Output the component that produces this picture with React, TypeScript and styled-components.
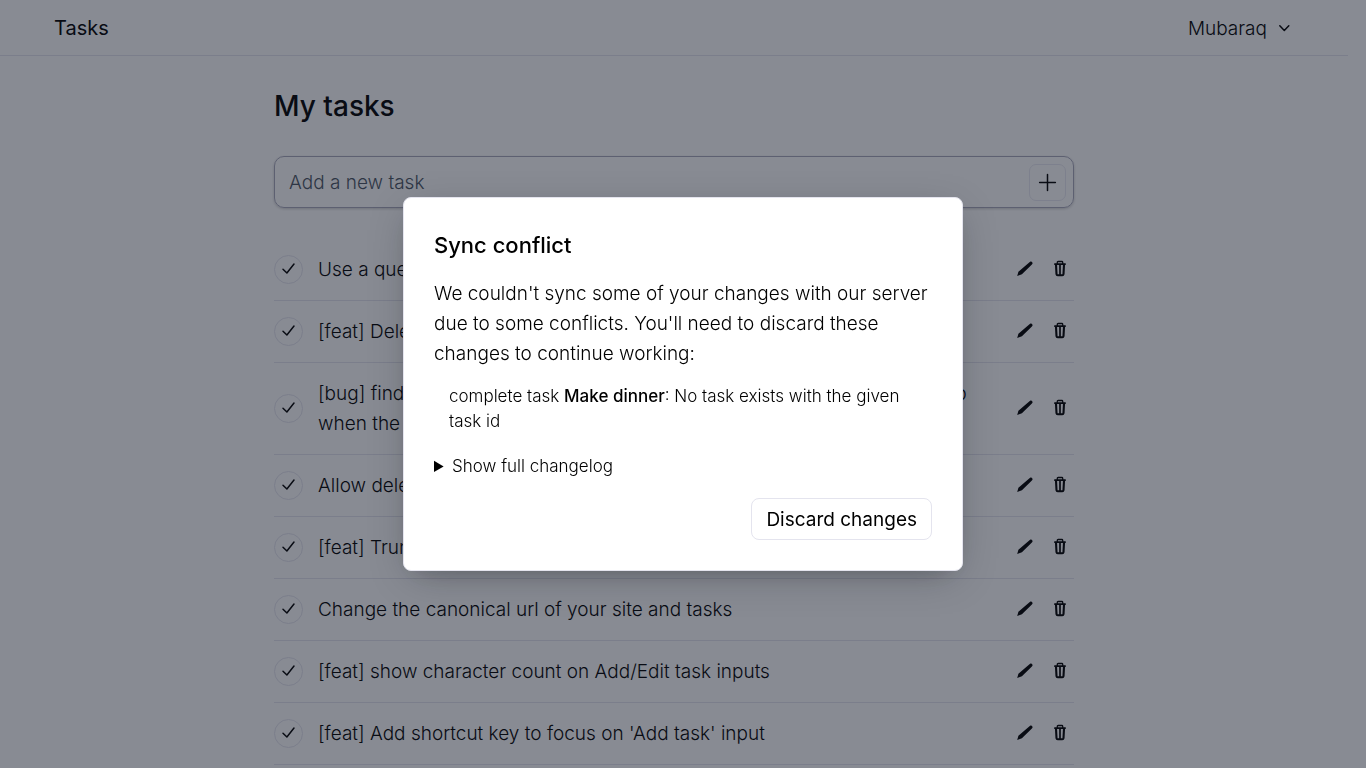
import React from 'react';
import styled, { createGlobalStyle } from 'styled-components';

const GlobalStyle = createGlobalStyle`
  *, *::before, *::after { box-sizing: border-box; }
  html { background: #fff; }
  body {
    margin: 0;
    font-family: Inter, "Open Sans", sans-serif;
    font-size: 19px;
    font-weight: 300;
    line-height: 30px;
    color: #000;
  }
  button, input { font: inherit; color: inherit; }
  h1, h2, p, ul { margin: 0; padding: 0; }
  ul { list-style: none; }
`;

const Page = styled.div`
  padding-right: 18px;
`;

const Header = styled.header`
  display: flex;
  align-items: center;
  justify-content: space-between;
  height: 56px;
  padding: 0 54px;
  border-bottom: 1px solid #e4e4ee;
`;

const Brand = styled.a`
  color: inherit;
  font-size: 20px;
  font-weight: 400;
  text-decoration: none;
`;

const AccountButton = styled.button`
  display: flex;
  align-items: center;
  gap: 8px;
  padding: 2px 0 0;
  border: 0;
  background: none;
`;

const Main = styled.main`
  max-width: 800px;
  margin: 0 auto;
  padding-top: 32px;
`;

const PageTitle = styled.h1`
  font-size: 28px;
  font-weight: 500;
  line-height: 36px;
`;

const AddForm = styled.form`
  display: flex;
  align-items: center;
  height: 52px;
  margin: 32px 0 31px;
  padding: 0 7px 0 14px;
  border: 1px solid #a9a9bb;
  border-radius: 10px;
  box-shadow: 0 1px 3px rgba(0, 0, 0, 0.2);
`;

const AddInput = styled.input`
  flex: 1;
  min-width: 0;
  padding: 2px 0 0;
  border: 0;
  outline: 0;
  background: none;
  &::placeholder { color: #4b5563; opacity: 1; }
`;

const AddButton = styled.button`
  display: grid;
  place-items: center;
  width: 37px;
  height: 37px;
  padding: 0;
  border: 1px solid #e9e9f2;
  border-radius: 7px;
  background: none;
`;

const TaskRow = styled.li`
  display: flex;
  align-items: center;
  padding: 14px 0 15px;
  border-bottom: 1px solid #e4e4ee;
`;

const CompleteButton = styled.button`
  display: grid;
  place-items: center;
  flex: none;
  width: 29px;
  height: 29px;
  margin-right: 15px;
  padding: 0;
  border: 1px solid #e4e4ee;
  border-radius: 50%;
  background: none;
`;

const TaskText = styled.span`
  flex: 1;
  min-width: 0;
  padding: 2px 24px 0 0;
`;

const RowActions = styled.div`
  display: flex;
  gap: 7px;
`;

const IconButton = styled.button`
  display: grid;
  place-items: center;
  width: 28px;
  height: 28px;
  padding: 0;
  border: 0;
  background: none;
`;

const Overlay = styled.div`
  position: fixed;
  inset: 0;
  display: grid;
  place-items: center;
  background: rgba(17, 24, 39, 0.5);
`;

const Dialog = styled.section`
  width: 560px;
  max-width: calc(100% - 32px);
  padding: 31px 30px 30px;
  border: 1px solid #e4e4ee;
  border-radius: 8px;
  background: #fff;
  box-shadow: 0 10px 38px -10px rgba(14, 18, 22, 0.35), 0 10px 20px -15px rgba(14, 18, 22, 0.2);
`;

const DialogTitle = styled.h2`
  margin-bottom: 18px;
  font-size: 22px;
  font-weight: 500;
  line-height: 32px;
`;

const ConflictList = styled.ul`
  margin: 15px 0 20px;
  padding: 0 15px;
  font-size: 17px;
  line-height: 25px;
`;

const TaskName = styled.strong`
  font-weight: 500;
`;

const Changelog = styled.details`
  font-size: 17px;
  line-height: 25px;
`;

const DialogFooter = styled.div`
  display: flex;
  justify-content: flex-end;
  margin-top: 19px;
`;

const DiscardButton = styled.button`
  height: 42px;
  padding: 2px 14px 0;
  border: 1px solid #e4e4ee;
  border-radius: 8px;
  background: #fff;
  font-weight: 400;
`;

const CheckIcon = () => (
  <svg width="19" height="19" viewBox="0 0 19 19" fill="none" stroke="currentColor" strokeWidth="1.5" strokeLinecap="round" strokeLinejoin="round" aria-hidden="true">
    <path d="M4 9.2L7.9 13L15 4" />
  </svg>
);

const PlusIcon = () => (
  <svg width="19" height="19" viewBox="0 0 19 19" fill="none" stroke="currentColor" strokeWidth="1.5" strokeLinecap="round" aria-hidden="true">
    <path d="M9.5 1.6v15.8M1.6 9.5h15.8" />
  </svg>
);

const ChevronIcon = () => (
  <svg width="19" height="19" viewBox="0 0 19 19" fill="none" stroke="currentColor" strokeWidth="1.5" strokeLinecap="round" strokeLinejoin="round" aria-hidden="true">
    <path d="M4.8 6.7l4.5 4.8 4.5-4.8" />
  </svg>
);

const PencilIcon = () => (
  <svg width="20" height="20" viewBox="0 0 20 20" aria-hidden="true">
    <path d="M15.1 2.7c1.3-1.1 3.3.9 2.2 2.3L16.4 6 6.9 15.2 2.2 17 3.4 12.7 13.9 3.7z" fill="currentColor" />
  </svg>
);

const TrashIcon = () => (
  <svg width="20" height="20" viewBox="0 0 20 20" fill="none" stroke="currentColor" strokeLinecap="round" strokeLinejoin="round" aria-hidden="true">
    <path d="M4.9 5.1h10.2" strokeWidth="1.8" />
    <path d="M7.3 4.6V3.3c0-.5.3-.8.8-.8h3.8c.5 0 .8.3.8.8v1.3" strokeWidth="1.3" />
    <path d="M6 5.8l.5 9.3c.1.8.5 1.2 1.2 1.2h4.6c.7 0 1.1-.4 1.2-1.2l.5-9.3" strokeWidth="2.1" />
    <path d="M10 6.4v9.2" strokeWidth="1.7" />
  </svg>
);

const tasks = [
  'Use a queue to sync offline changes',
  '[feat] Delete all completed tasks',
  '[bug] find out why the list of completed tasks sometimes does not end up when the page is reloaded',
  'Allow deleting tasks while offline',
  '[feat] Truncate long task names',
  'Change the canonical url of your site and tasks',
  '[feat] show character count on Add/Edit task inputs',
  "[feat] Add shortcut key to focus on 'Add task' input",
];

export default function App() {
  return (
    <>
      <GlobalStyle />
      <Page>
        <Header>
          <Brand href="#">Tasks</Brand>
          <AccountButton type="button">
            Mubaraq
            <ChevronIcon />
          </AccountButton>
        </Header>
        <Main>
          <PageTitle>My tasks</PageTitle>
          <AddForm onSubmit={(e) => e.preventDefault()}>
            <AddInput type="text" placeholder="Add a new task" aria-label="Add a new task" />
            <AddButton type="submit" aria-label="Add task">
              <PlusIcon />
            </AddButton>
          </AddForm>
          <ul>
            {tasks.map((task) => (
              <TaskRow key={task}>
                <CompleteButton type="button" aria-label="Complete task">
                  <CheckIcon />
                </CompleteButton>
                <TaskText>{task}</TaskText>
                <RowActions>
                  <IconButton type="button" aria-label="Edit task">
                    <PencilIcon />
                  </IconButton>
                  <IconButton type="button" aria-label="Delete task">
                    <TrashIcon />
                  </IconButton>
                </RowActions>
              </TaskRow>
            ))}
          </ul>
        </Main>
      </Page>
      <Overlay>
        <Dialog role="alertdialog" aria-modal="true" aria-labelledby="conflict-title">
          <DialogTitle id="conflict-title">Sync conflict</DialogTitle>
          <p>
            We couldn't sync some of your changes with our server due to some conflicts. You'll need to
            discard these changes to continue working:
          </p>
          <ConflictList>
            <li>
              complete task <TaskName>Make dinner</TaskName>: No task exists with the given task id
            </li>
          </ConflictList>
          <Changelog>
            <summary>Show full changelog</summary>
          </Changelog>
          <DialogFooter>
            <DiscardButton type="button">Discard changes</DiscardButton>
          </DialogFooter>
        </Dialog>
      </Overlay>
    </>
  );
}
